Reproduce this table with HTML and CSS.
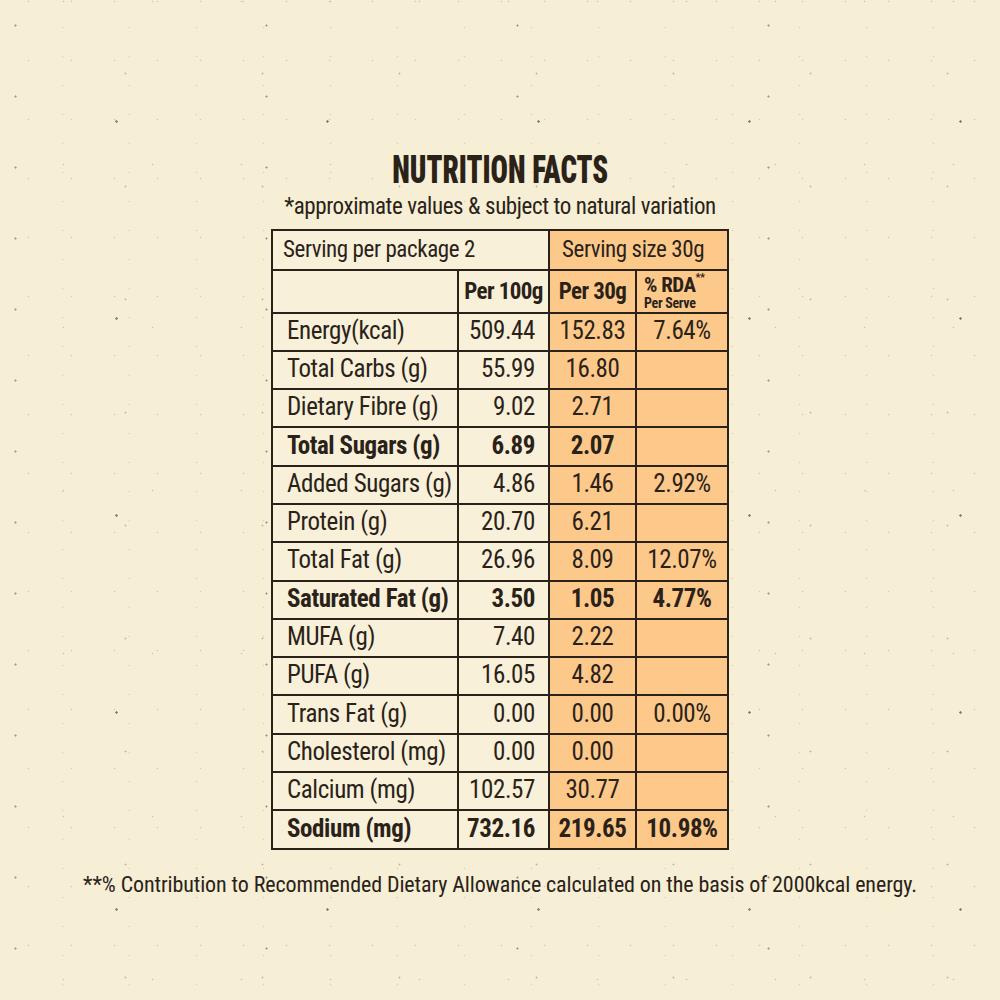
FILE: index.html
```html
<!DOCTYPE html>
<html lang="en">
<head>
<meta charset="utf-8">
<title>Nutrition Facts</title>
<link rel="stylesheet" href="styles.css">
</head>
<body>
<main class="page">
  <h1 class="title">NUTRITION FACTS</h1>
  <p class="subtitle">*approximate values &amp; subject to natural variation</p>
  <table class="facts">
    <colgroup>
      <col class="c-label">
      <col class="c-100">
      <col class="c-30">
      <col class="c-rda">
    </colgroup>
    <tr class="head1">
      <td colspan="2" class="cream left">Serving per package 2</td>
      <td colspan="2" class="orange left">Serving size 30g</td>
    </tr>
    <tr class="head2">
      <td class="cream"></td>
      <td class="cream center b">Per 100g</td>
      <td class="orange center b">Per 30g</td>
      <td class="orange rda-head"><span class="rda-top">% RDA<sup>**</sup></span><span class="rda-sub">Per Serve</span></td>
    </tr>
    <tr><td class="cream label">Energy(kcal)</td><td class="cream num">509.44</td><td class="orange mid">152.83</td><td class="orange mid">7.64%</td></tr>
    <tr><td class="cream label">Total Carbs (g)</td><td class="cream num">55.99</td><td class="orange mid">16.80</td><td class="orange mid"></td></tr>
    <tr><td class="cream label">Dietary Fibre (g)</td><td class="cream num">9.02</td><td class="orange mid">2.71</td><td class="orange mid"></td></tr>
    <tr class="bold"><td class="cream label">Total Sugars (g)</td><td class="cream num">6.89</td><td class="orange mid">2.07</td><td class="orange mid"></td></tr>
    <tr><td class="cream label">Added Sugars (g)</td><td class="cream num">4.86</td><td class="orange mid">1.46</td><td class="orange mid">2.92%</td></tr>
    <tr><td class="cream label">Protein (g)</td><td class="cream num">20.70</td><td class="orange mid">6.21</td><td class="orange mid"></td></tr>
    <tr><td class="cream label">Total Fat (g)</td><td class="cream num">26.96</td><td class="orange mid">8.09</td><td class="orange mid">12.07%</td></tr>
    <tr class="bold"><td class="cream label">Saturated Fat (g)</td><td class="cream num">3.50</td><td class="orange mid">1.05</td><td class="orange mid">4.77%</td></tr>
    <tr><td class="cream label">MUFA (g)</td><td class="cream num">7.40</td><td class="orange mid">2.22</td><td class="orange mid"></td></tr>
    <tr><td class="cream label">PUFA (g)</td><td class="cream num">16.05</td><td class="orange mid">4.82</td><td class="orange mid"></td></tr>
    <tr><td class="cream label">Trans Fat (g)</td><td class="cream num">0.00</td><td class="orange mid">0.00</td><td class="orange mid">0.00%</td></tr>
    <tr><td class="cream label">Cholesterol (mg)</td><td class="cream num">0.00</td><td class="orange mid">0.00</td><td class="orange mid"></td></tr>
    <tr><td class="cream label">Calcium (mg)</td><td class="cream num">102.57</td><td class="orange mid">30.77</td><td class="orange mid"></td></tr>
    <tr class="bold"><td class="cream label">Sodium (mg)</td><td class="cream num">732.16</td><td class="orange mid">219.65</td><td class="orange mid">10.98%</td></tr>
  </table>
  <p class="footnote">**% Contribution to Recommended Dietary Allowance calculated on the basis of 2000kcal energy.</p>
</main>
</body>
</html>
```

FILE: styles.css
```css
html, body {
  margin: 0;
  padding: 0;
}
body {
  width: 1000px;
  height: 1000px;
  overflow: hidden;
  background-color: #f6eed5;
  background-image:
    radial-gradient(circle, rgba(50,40,25,.6) 0.9px, transparent 1.5px),
    radial-gradient(circle, rgba(90,75,55,.35) 0.7px, transparent 1.2px),
    radial-gradient(circle, rgba(110,95,70,.3) 0.6px, transparent 1.1px),
    radial-gradient(circle, rgba(60,45,30,.45) 0.8px, transparent 1.3px),
    radial-gradient(circle, rgba(120,105,80,.25) 0.6px, transparent 1.1px),
    radial-gradient(circle, rgba(120,105,80,.22) 0.6px, transparent 1.1px);
  background-size: 211px 197px, 137px 113px, 89px 163px, 251px 71px, 43px 59px, 67px 29px;
  background-position: 11px 23px, 57px 17px, 19px 83px, 141px 61px, 7px 31px, 29px 13px;
  color: #2a2218;
  font-family: "Roboto Condensed", "Open Sans", "DejaVu Sans Condensed", sans-serif;
  font-stretch: 75%;
}
.page {
  display: flex;
  flex-direction: column;
  align-items: center;
  padding-top: 150px;
}
.title {
  margin: 0;
  font-size: 38px;
  line-height: 40px;
  font-weight: 900;
  transform: scaleX(0.76);
}
.subtitle {
  margin: 2px 0 0;
  font-size: 23px;
  line-height: 30px;
  letter-spacing: -0.4px;
}
.facts {
  margin-top: 7px;
  border-collapse: collapse;
  table-layout: fixed;
  width: 456px;
  border: 2px solid #2a2218;
  font-size: 25px;
  letter-spacing: -0.4px;
}
.c-label { width: 186px; }
.c-100 { width: 91px; }
.c-30 { width: 87px; }
.c-rda { width: 92px; }
.facts td {
  border: 2px solid #2a2218;
  height: 34.3px;
  padding: 0 0 2px;
  line-height: 30px;
  white-space: nowrap;
  overflow: hidden;
}
.cream { background: #f8f0d9; }
.orange { background: #fdc98b; }
.head1 td {
  height: 37.5px;
  padding: 0;
  font-size: 23px;
}
.head1 .left { padding-left: 10px; }
.head1 .orange.left { padding-left: 12px; }
.head2 td {
  height: 39px;
  font-size: 23px;
  font-weight: 700;
  letter-spacing: -0.6px;
  padding: 2px 0 0;
}
.center { text-align: center; }
.b { font-weight: 700; }
.rda-head {
  padding-left: 7px !important;
  vertical-align: middle;
}
.rda-top {
  display: block;
  font-size: 21px;
  line-height: 23px;
  letter-spacing: -0.5px;
}
.rda-top sup {
  font-size: 11px;
  position: relative;
  top: -2px;
  vertical-align: top;
  line-height: 11px;
}
.rda-sub {
  display: block;
  font-size: 14px;
  line-height: 13px;
  letter-spacing: -0.3px;
}
.label { padding-left: 14px !important; }
.num { text-align: right; padding-right: 13px !important; }
.mid { text-align: center; }
.bold td { font-weight: 700; }
.footnote {
  margin: 21px 0 0;
  font-size: 22px;
  line-height: 28px;
  letter-spacing: -0.1px;
}
```
